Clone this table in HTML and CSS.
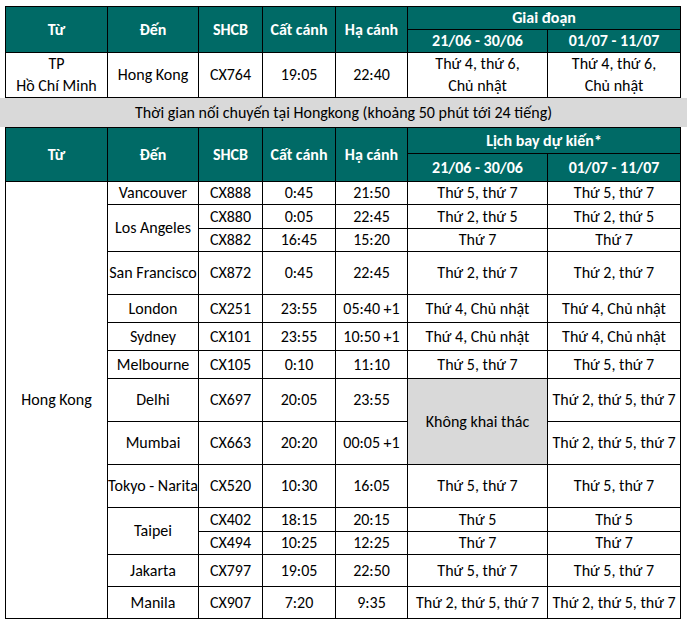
FILE: index.html
```html
<!DOCTYPE html>
<html lang="vi">
<head>
<meta charset="utf-8">
<title>Lịch bay</title>
<link rel="stylesheet" href="styles.css">
</head>
<body>
<table class="sched">
  <colgroup>
    <col class="c-from"><col class="c-to"><col class="c-code"><col class="c-dep"><col class="c-arr"><col class="c-p1"><col class="c-p2">
  </colgroup>
  <tr class="h23">
    <th rowspan="2">Từ</th>
    <th rowspan="2">Đến</th>
    <th rowspan="2">SHCB</th>
    <th rowspan="2">Cất cánh</th>
    <th rowspan="2">Hạ cánh</th>
    <th colspan="2">Giai đoạn</th>
  </tr>
  <tr class="h23">
    <th>21/06 - 30/06</th>
    <th>01/07 - 11/07</th>
  </tr>
  <tr class="h45">
    <td class="two">TP<br>Hồ Chí Minh</td>
    <td>Hong Kong</td>
    <td>CX764</td>
    <td>19:05</td>
    <td>22:40</td>
    <td class="two">Thứ 4, thứ 6,<br>Chủ nhật</td>
    <td class="two">Thứ 4, thứ 6,<br>Chủ nhật</td>
  </tr>
</table>

<div class="band">Thời gian nối chuyến tại Hongkong (khoảng 50 phút tới 24 tiếng)</div>

<table class="sched">
  <colgroup>
    <col class="c-from"><col class="c-to"><col class="c-code"><col class="c-dep"><col class="c-arr"><col class="c-p1"><col class="c-p2">
  </colgroup>
  <tr class="h26">
    <th rowspan="2">Từ</th>
    <th rowspan="2">Đến</th>
    <th rowspan="2">SHCB</th>
    <th rowspan="2">Cất cánh</th>
    <th rowspan="2">Hạ cánh</th>
    <th colspan="2">Lịch bay dự kiến*</th>
  </tr>
  <tr class="h28">
    <th>21/06 - 30/06</th>
    <th>01/07 - 11/07</th>
  </tr>
  <tr class="h23">
    <td rowspan="14">Hong Kong</td>
    <td>Vancouver</td><td>CX888</td><td>0:45</td><td>21:50</td><td>Thứ 5, thứ 7</td><td>Thứ 5, thứ 7</td>
  </tr>
  <tr class="h24">
    <td rowspan="2">Los Angeles</td><td>CX880</td><td>0:05</td><td>22:45</td><td>Thứ 2, thứ 5</td><td>Thứ 2, thứ 5</td>
  </tr>
  <tr class="h23">
    <td>CX882</td><td>16:45</td><td>15:20</td><td>Thứ 7</td><td>Thứ 7</td>
  </tr>
  <tr class="h43">
    <td>San Francisco</td><td>CX872</td><td>0:45</td><td>22:45</td><td>Thứ 2, thứ 7</td><td>Thứ 2, thứ 7</td>
  </tr>
  <tr class="h28">
    <td>London</td><td>CX251</td><td>23:55</td><td>05:40 +1</td><td>Thứ 4, Chủ nhật</td><td>Thứ 4, Chủ nhật</td>
  </tr>
  <tr class="h28">
    <td>Sydney</td><td>CX101</td><td>23:55</td><td>10:50 +1</td><td>Thứ 4, Chủ nhật</td><td>Thứ 4, Chủ nhật</td>
  </tr>
  <tr class="h28">
    <td>Melbourne</td><td>CX105</td><td>0:10</td><td>11:10</td><td>Thứ 5, thứ 7</td><td>Thứ 5, thứ 7</td>
  </tr>
  <tr class="h43">
    <td>Delhi</td><td>CX697</td><td>20:05</td><td>23:55</td><td rowspan="2" class="off">Không khai thác</td><td>Thứ 2, thứ 5, thứ 7</td>
  </tr>
  <tr class="h43">
    <td>Mumbai</td><td>CX663</td><td>20:20</td><td>00:05 +1</td><td>Thứ 2, thứ 5, thứ 7</td>
  </tr>
  <tr class="h43">
    <td>Tokyo - Narita</td><td>CX520</td><td>10:30</td><td>16:05</td><td>Thứ 5, thứ 7</td><td>Thứ 5, thứ 7</td>
  </tr>
  <tr class="h24">
    <td rowspan="2">Taipei</td><td>CX402</td><td>18:15</td><td>20:15</td><td>Thứ 5</td><td>Thứ 5</td>
  </tr>
  <tr class="h23">
    <td>CX494</td><td>10:25</td><td>12:25</td><td>Thứ 7</td><td>Thứ 7</td>
  </tr>
  <tr class="h32">
    <td>Jakarta</td><td>CX797</td><td>19:05</td><td>22:50</td><td>Thứ 5, thứ 7</td><td>Thứ 5, thứ 7</td>
  </tr>
  <tr class="h32">
    <td>Manila</td><td>CX907</td><td>7:20</td><td>9:35</td><td>Thứ 2, thứ 5, thứ 7</td><td>Thứ 2, thứ 5, thứ 7</td>
  </tr>
</table>
</body>
</html>
```
FILE: styles.css
```css
html, body {
  margin: 0;
  padding: 0;
  background: #ffffff;
}
body {
  padding-top: 6px;
  font-family: Carlito, Calibri, Lato, "Noto Sans", sans-serif;
  font-size: 16px;
  color: #000000;
}
.sched {
  border-collapse: collapse;
  table-layout: fixed;
  width: 675px;
  margin-left: 5px;
}
.c-from { width: 102px; }
.c-to { width: 91px; }
.c-code { width: 64px; }
.c-dep { width: 73px; }
.c-arr { width: 72px; }
.c-p1 { width: 140px; }
.c-p2 { width: 133px; }
.sched th,
.sched td {
  border: 1px solid #000000;
  padding: 0;
  text-align: center;
  vertical-align: middle;
  white-space: nowrap;
  line-height: 20px;
}
.sched td.two {
  line-height: 22px;
}
.sched th {
  background: #006a66;
  color: #ffffff;
  font-weight: bold;
}
.sched td.off {
  background: #d9d9d9;
}
.h23 { height: 23px; }
.h24 { height: 24px; }
.h26 { height: 26px; }
.h28 { height: 28px; }
.h32 { height: 32px; }
.h43 { height: 43px; }
.h45 { height: 45px; }
.band {
  background: #d9d9d9;
  height: 29px;
  line-height: 29px;
  text-align: center;
}
```
